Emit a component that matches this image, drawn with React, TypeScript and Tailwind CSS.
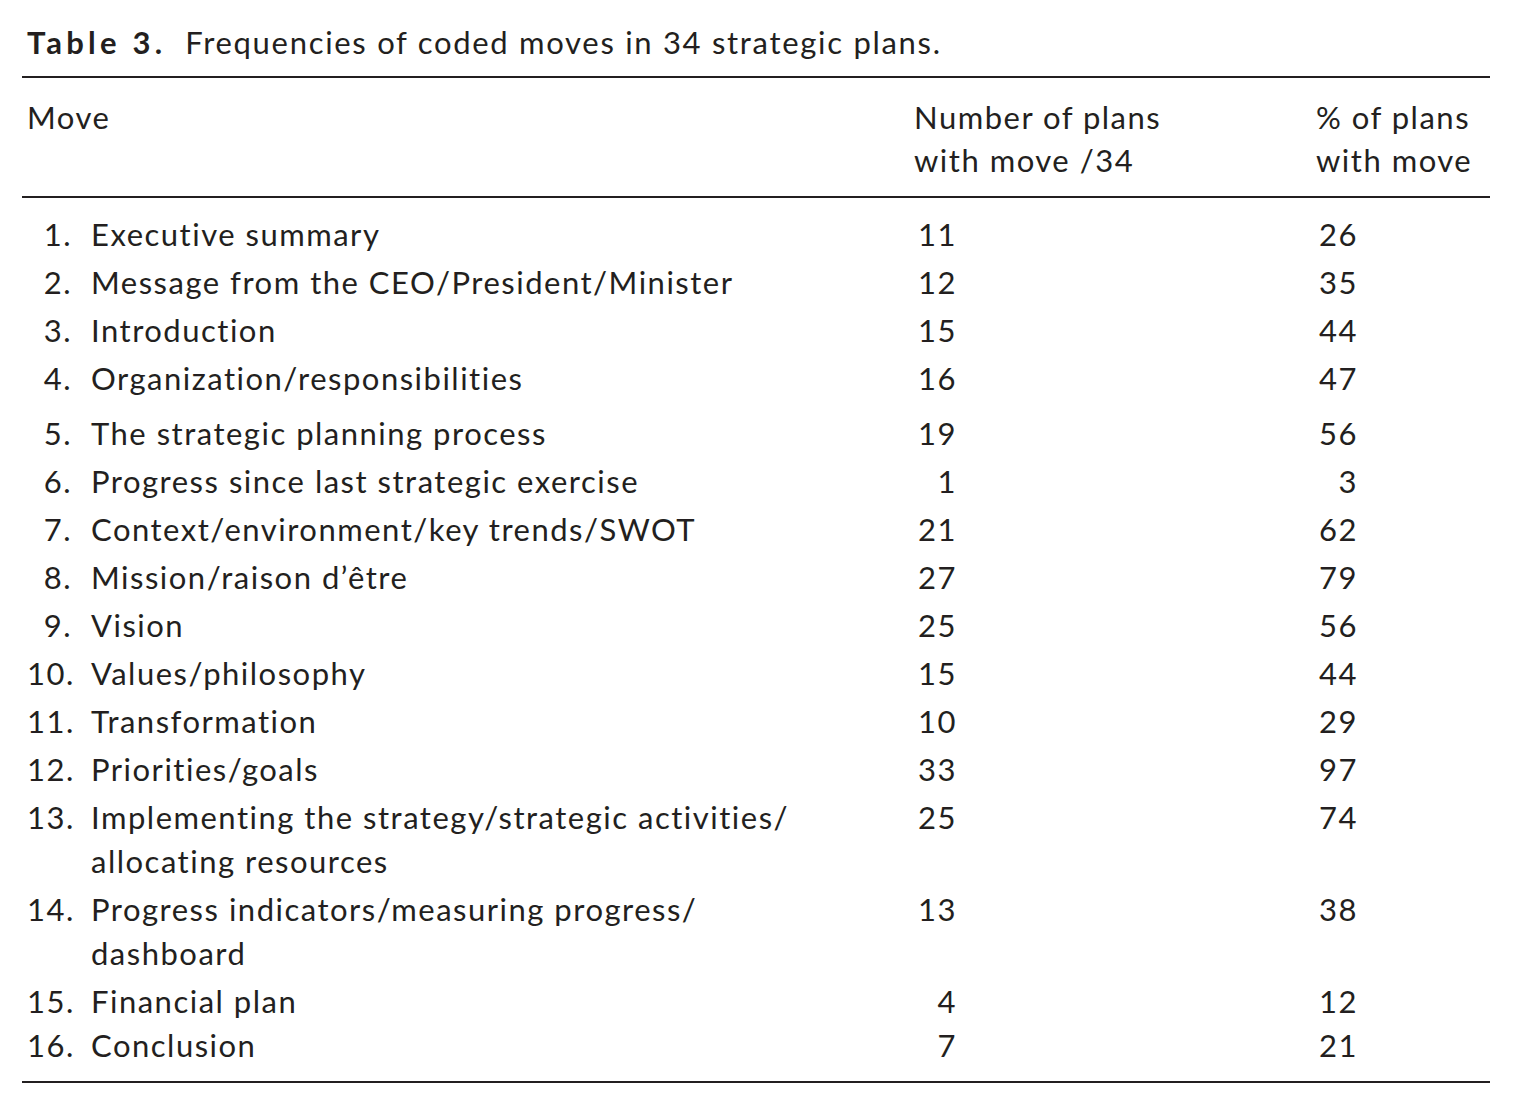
const rows: { n: string; label: string[]; count: string; pct: string; cls?: string }[] = [
  { n: "1.", label: ["Executive summary"], count: "11", pct: "26" },
  { n: "2.", label: ["Message from the CEO/President/Minister"], count: "12", pct: "35" },
  { n: "3.", label: ["Introduction"], count: "15", pct: "44" },
  { n: "4.", label: ["Organization/responsibilities"], count: "16", pct: "47" },
  { n: "5.", label: ["The strategic planning process"], count: "19", pct: "56", cls: "mt-[7px]" },
  { n: "6.", label: ["Progress since last strategic exercise"], count: "1", pct: "3" },
  { n: "7.", label: ["Context/environment/key trends/SWOT"], count: "21", pct: "62" },
  { n: "8.", label: ["Mission/raison d\u2019\u00eatre"], count: "27", pct: "79" },
  { n: "9.", label: ["Vision"], count: "25", pct: "56" },
  { n: "10.", label: ["Values/philosophy"], count: "15", pct: "44" },
  { n: "11.", label: ["Transformation"], count: "10", pct: "29" },
  { n: "12.", label: ["Priorities/goals"], count: "33", pct: "97" },
  {
    n: "13.",
    label: ["Implementing the strategy/strategic activities/", "allocating resources"],
    count: "25",
    pct: "74",
  },
  {
    n: "14.",
    label: ["Progress indicators/measuring progress/", "dashboard"],
    count: "13",
    pct: "38",
  },
  { n: "15.", label: ["Financial plan"], count: "4", pct: "12" },
  { n: "16.", label: ["Conclusion"], count: "7", pct: "21", cls: "-mt-[4px]" },
];

export default function App() {
  return (
    <main className="min-h-screen w-[1516px] bg-white pl-[22px] pt-[22px] text-[31px] tracking-[1.5px] text-[#231f20] [font-family:Lato,'Open_Sans',sans-serif] [font-variant-ligatures:none]">
      <div className="w-[1468px]">
        <h1 className="pl-[5px] leading-[40px]">
          <span className="font-bold tracking-[4.2px]">Table 3.</span>
          <span className="ml-[19px] tracking-[1.7px]">
            Frequencies of coded moves in 34 strategic plans.
          </span>
        </h1>

        <div className="mt-[14px] h-[2px] bg-[#231f20]" />

        <div className="grid grid-cols-[887px_402px_1fr] pb-[14px] pl-[5px] pt-[18px] leading-[43px]">
          <div>Move</div>
          <div>
            Number of plans
            <br />
            with move /34
          </div>
          <div>
            % of plans
            <br />
            with move
          </div>
        </div>

        <div className="h-[2px] bg-[#231f20]" />

        <div className="pt-[12px]">
          {rows.map((r) => (
            <div
              key={r.n}
              className={`grid grid-cols-[887px_402px_1fr] py-[2px] pl-[5px] leading-[44px] ${r.cls ?? ""}`}
            >
              <div className="flex">
                <span className="w-[45px] shrink-0 text-right">{r.n}</span>
                <span className="ml-[19px]">
                  {r.label.map((l, i) => (
                    <div key={i}>{l}</div>
                  ))}
                </span>
              </div>
              <div className="w-[43px] text-right">{r.count}</div>
              <div className="w-[42px] text-right">{r.pct}</div>
            </div>
          ))}
        </div>

        <div className="mt-[12px] h-[2px] bg-[#231f20]" />
      </div>
    </main>
  );
}
